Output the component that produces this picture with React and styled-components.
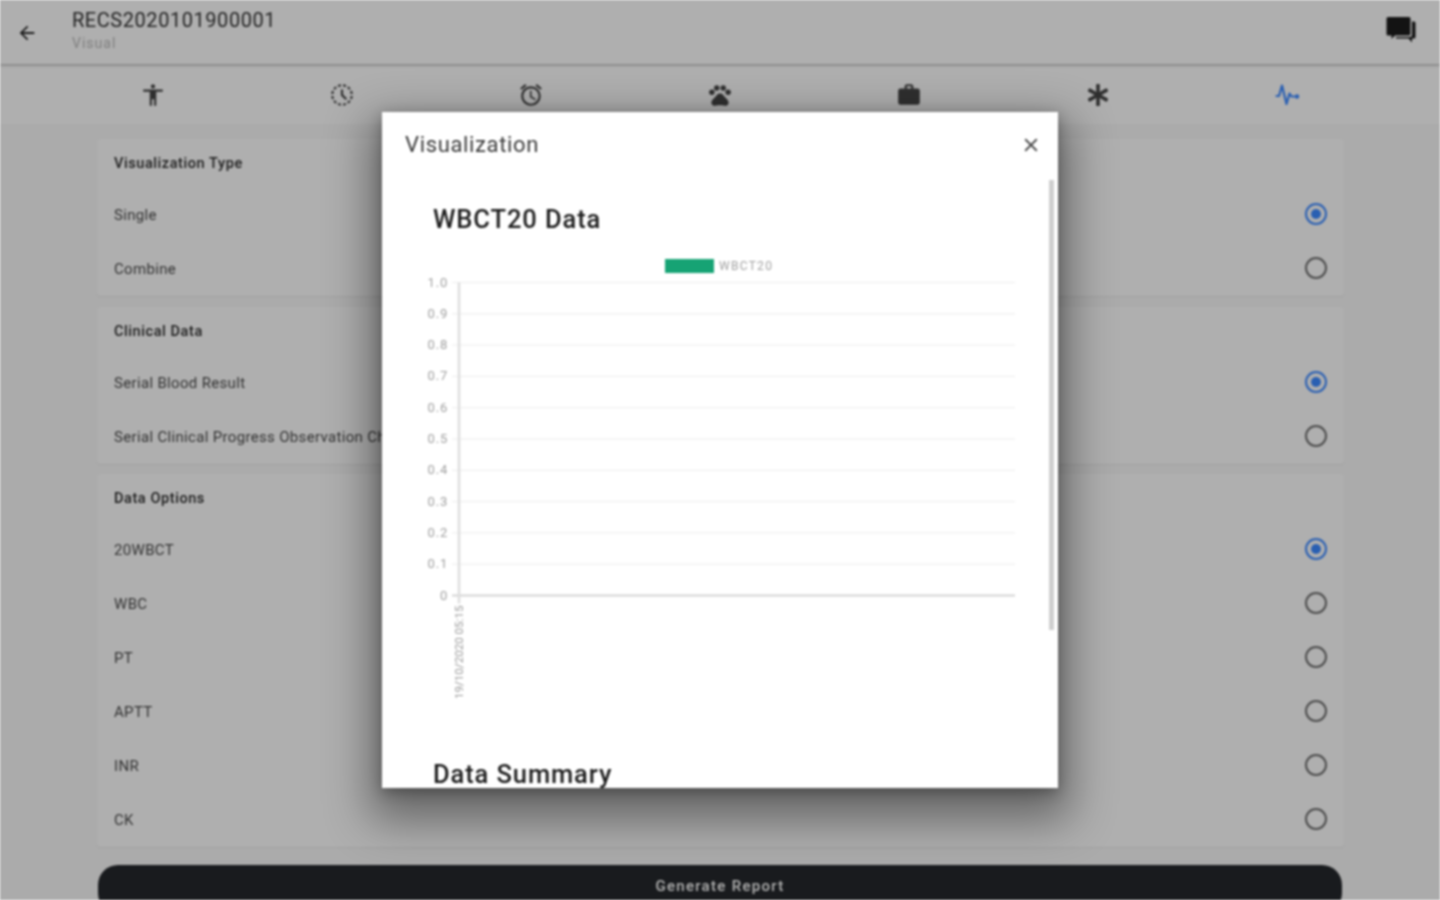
import React from "react";
import styled, { createGlobalStyle } from "styled-components";
import {
  MdArrowBack, MdAccessibility, MdHistoryToggleOff, MdOutlineAccessAlarm,
  MdPets, MdWork, MdClose,
} from "react-icons/md";
import { FaAsterisk } from "react-icons/fa";

const Global = createGlobalStyle`
  html, body { margin: 0; height: 100%; background: #f5f5f5; overflow: hidden; }
  body { font-family: Roboto, "Liberation Sans", sans-serif; }
`;

const Page = styled.div`
  position: relative; width: 1440px; height: 900px; overflow: hidden;
  background: #f5f5f5; display: flex; flex-direction: column; filter: blur(0.8px);
`;
const Header = styled.header`
  height: 64px; flex: none; background: #fbfbfb; display: flex; align-items: center;
  padding: 0 24px 0 16px; box-shadow: 0 1px 3px rgba(0,0,0,.3); position: relative; z-index: 1;
  color: #2c2c2c;
`;
const Back = styled.div`display: flex; width: 56px; font-size: 22px; margin-top: 1px;`;
const HeaderText = styled.div`flex: 1; display: flex; flex-direction: column; gap: 2px; margin-top: -4px;`;
const HeaderTitle = styled.div`font-size: 20px; line-height: 24px; letter-spacing: .55px; color: #333;`;
const HeaderSub = styled.div`font-size: 14px; line-height: 18px; color: #b8b8b8; letter-spacing: 1px;`;
const Chat = styled.div`display: flex; color: #1c1c1c; margin-top: -4px;`;

const Tabs = styled.nav`
  height: 58px; margin-top: 2px; flex: none; background: #fbfbfb; display: grid;
  grid-template-columns: repeat(7, 189px); padding: 0 58px; align-items: center;
`;
const Tab = styled.div`
  display: flex; justify-content: center; margin-top: -1px;
  font-size: ${p => p.$size || 26}px; color: ${p => p.$active ? "#3c88ff" : "#444"};
`;

const Content = styled.main`
  flex: 1; padding: 15px 96px 0 97px; display: flex; flex-direction: column; gap: 10px;
`;
const Card = styled.section`
  background: #fbfbfb; border-radius: 4px; box-shadow: 0 1px 2px rgba(0,0,0,.06); padding: 0 0 0 17px;
  &:first-child { margin-bottom: 1px; }
`;
const CardTitle = styled.div`height: 49px; display: flex; align-items: center; font-size: 14.5px; font-weight: 500; letter-spacing: .58px; color: #2b2b2b;`;
const Row = styled.div`height: 54px; display: flex; align-items: center; justify-content: space-between; padding-right: 17px; font-size: 15px; letter-spacing: .33px; color: #4a4a4a; white-space: nowrap;`;
const Radio = styled.span`
  width: 22px; height: 22px; box-sizing: border-box; border-radius: 50%; flex: none; margin-top: -2px;
  border: 2px solid ${p => p.$on ? "#3c88ff" : "#6e6e6e"};
  display: flex; align-items: center; justify-content: center;
  &::after { content: ""; width: 10px; height: 10px; border-radius: 50%; background: ${p => p.$on ? "#3c88ff" : "transparent"}; }
`;
const Generate = styled.button`
  margin: 8px 2px 0 1px; height: 48px; flex: none; border: 0; border-radius: 20px; background: #25282b;
  color: #fff; font: 500 15px Roboto, sans-serif; letter-spacing: 1.3px; padding: 0 0 7px;
`;

const Overlay = styled.div`
  position: absolute; inset: 0; background: rgba(0,0,0,.3); z-index: 5;
  display: flex; align-items: flex-start; justify-content: center; padding-top: 112px;
`;
const Modal = styled.div`
  position: relative; width: 676px; height: 676px; background: #fff; overflow: hidden;
  display: flex; flex-direction: column;
`;
const ModalShadow = styled.div`
  border-radius: 2px;
  box-shadow: 0 20px 45px 12px rgba(0,0,0,.42), 0 4px 14px rgba(0,0,0,.3);
`;
const ModalHead = styled.div`
  height: 64px; flex: none; display: flex; align-items: center; justify-content: space-between;
  padding: 0 16px 0 23px;
`;
const ModalTitle = styled.div`font-size: 22px; letter-spacing: .65px; color: #3a3a3a; margin-top: 1px;`;
const CloseBtn = styled.div`display: flex; font-size: 22px; color: #444; margin-top: 1px;`;
const ModalBody = styled.div`flex: 1; overflow: hidden; padding: 21px 0 0 51px;`;
const Heading = styled.h2`margin: 0; font-size: 25.5px; line-height: 44px; font-weight: 500; letter-spacing: .9px; color: #1d1d1d; white-space: nowrap;`;
const ChartSvg = styled.svg`display: block; margin: 10px 0 0 -51px; overflow: visible;`;
const SummaryHeading = styled(Heading)`margin-top: 41px;`;
const Scrollbar = styled.div`position: absolute; right: 4px; top: 68px; width: 5px; height: 450px; background: #cfcfcf;`;

const options = [
  { title: "Visualization Type", rows: ["Single", "Combine"] },
  { title: "Clinical Data", rows: ["Serial Blood Result", "Serial Clinical Progress Observation Chart"] },
  { title: "Data Options", rows: ["20WBCT", "WBC", "PT", "APTT", "INR", "CK"] },
];

const Pulse = () => (
  <svg width="26" height="26" viewBox="0 0 26 26" fill="none" stroke="currentColor" strokeWidth="2.2" strokeLinejoin="round" strokeLinecap="round" style={{ marginLeft: 2 }}>
    <path d="M1.5 14 L4 14 L7 3.5 L11.5 22 L14.5 11.5 L16.5 14.5 L19 14.5" />
    <circle cx="22" cy="14.5" r="2.2" fill="currentColor" stroke="none" />
  </svg>
);

const ChatBubbles = () => (
  <svg width="30" height="28" viewBox="0 0 30 28" fill="currentColor">
    <path d="M2 1 H23 a1.5 1.5 0 0 1 1.5 1.5 V18 a1.5 1.5 0 0 1 -1.5 1.5 H9 L5.5 23 V19.5 H2 A1.5 1.5 0 0 1 0.5 18 V2.5 A1.5 1.5 0 0 1 2 1 Z" />
    <path d="M26 5.5 H28 a1.5 1.5 0 0 1 1.5 1.5 V21 a1.5 1.5 0 0 1 -1.5 1.5 H26 V26.5 L22.5 22.5 H10 V21 H24 a2 2 0 0 0 2 -2 Z" />
  </svg>
);

const ticks = ["1.0", "0.9", "0.8", "0.7", "0.6", "0.5", "0.4", "0.3", "0.2", "0.1", "0"];

// Chart coordinates: x is relative to the modal's left edge, y to the svg's top.
const Chart = () => {
  const top = 31.5, step = 31.3, axis = 77;
  return (
    <ChartSvg width="676" height="460" viewBox="0 0 676 460" fontFamily="Roboto, sans-serif">
      <rect x="283" y="8" width="49" height="14" fill="#16a374" />
      <text x="337" y="19" fontSize="12" fill="#a0a0a0" letterSpacing="1.3">WBCT20</text>
      {ticks.map((t, i) => {
        const y = top + i * step;
        const last = i === ticks.length - 1;
        return (
          <g key={t}>
            <line x1="70" x2="633" y1={y} y2={y} stroke={last ? "#d4d4d4" : "#ececec"} strokeWidth={last ? 2 : 1} />
            <text x="66" y={y + 4} fontSize="13" fill="#a0a0a0" letterSpacing=".8" textAnchor="end">{t}</text>
          </g>
        );
      })}
      <line x1={axis} x2={axis} y1={top} y2={top + 10 * step + 8} stroke="#dedede" strokeWidth="2.5" />
      <text transform="translate(81 448) rotate(-90)" fontSize="11.6" fill="#9a9a9a">19/10/2020 05:15</text>
    </ChartSvg>
  );
};

export default function App() {
  return (
    <Page>
      <Global />
      <Header>
        <Back><MdArrowBack /></Back>
        <HeaderText>
          <HeaderTitle>RECS2020101900001</HeaderTitle>
          <HeaderSub>Visual</HeaderSub>
        </HeaderText>
        <Chat><ChatBubbles /></Chat>
      </Header>
      <Tabs>
        <Tab><MdAccessibility /></Tab>
        <Tab><MdHistoryToggleOff /></Tab>
        <Tab><MdOutlineAccessAlarm /></Tab>
        <Tab><MdPets /></Tab>
        <Tab><MdWork /></Tab>
        <Tab $size={22}><FaAsterisk /></Tab>
        <Tab $active><Pulse /></Tab>
      </Tabs>
      <Content>
        {options.map(group => (
          <Card key={group.title}>
            <CardTitle>{group.title}</CardTitle>
            {group.rows.map((r, i) => (
              <Row key={r}>{r}<Radio $on={i === 0} /></Row>
            ))}
          </Card>
        ))}
        <Generate>Generate Report</Generate>
      </Content>
      <Overlay>
        <ModalShadow>
          <Modal>
            <ModalHead>
              <ModalTitle>Visualization</ModalTitle>
              <CloseBtn><MdClose /></CloseBtn>
            </ModalHead>
            <ModalBody>
              <Heading>WBCT20 Data</Heading>
              <Chart />
              <SummaryHeading>Data Summary</SummaryHeading>
            </ModalBody>
            <Scrollbar />
          </Modal>
        </ModalShadow>
      </Overlay>
    </Page>
  );
}
